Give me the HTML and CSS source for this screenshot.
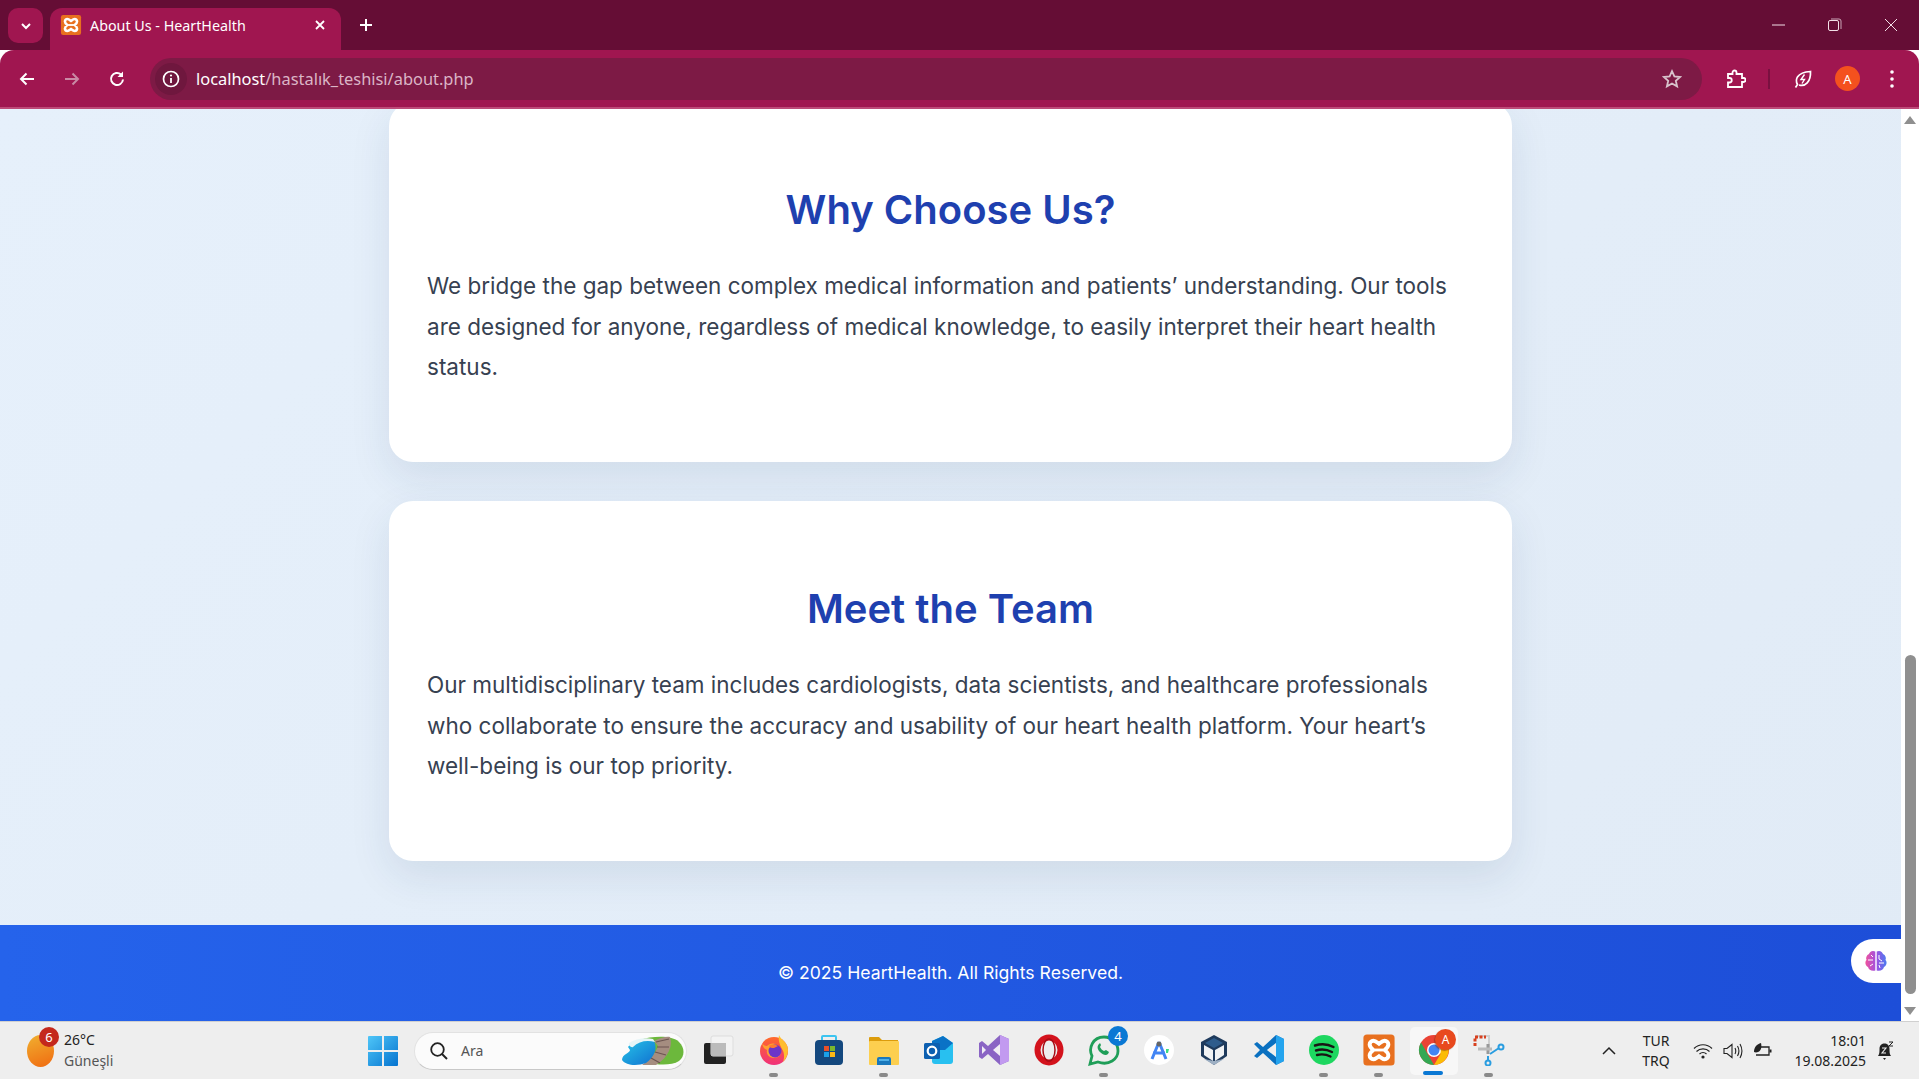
FILE: index.html
```html
<!DOCTYPE html>
<html lang="en">
<head>
    <meta charset="UTF-8">
    <title>About Us - HeartHealth</title>
    <link rel="stylesheet" href="styles.css">
</head>
<body>
    <svg class="defs" width="0" height="0">
        <symbol id="xampp" viewBox="0 0 24 24">
            <rect x="1" y="1" width="22" height="22" rx="2.500" fill="#e8701f"/>
            <path d="M8 5.500a2.600 2.600 0 0 0-2.600 2.600c0 1.700 1.300 2.900 2.600 3.900-1.300 1-2.600 2.200-2.600 3.900A2.600 2.600 0 0 0 8 18.500c1.700 0 2.900-1.300 4-2.100 1.100.8 2.300 2.100 4 2.100a2.600 2.600 0 0 0 2.600-2.600c0-1.700-1.300-2.900-2.600-3.900 1.300-1 2.600-2.200 2.600-3.900A2.600 2.600 0 0 0 16 5.500c-1.700 0-2.900 1.300-4 2.100-1.100-.8-2.300-2.100-4-2.100z" fill="none" stroke="#fff" stroke-width="2.800"/>
            <path d="M9 12h6" stroke="#fff" stroke-width="2"/>
        </symbol>
    </svg>

    <header class="tabstrip">
        <div class="tab-search">
            <svg width="14" height="14" viewBox="0 0 14 14"><path d="M3 5l4 4 4-4" fill="none" stroke="#fff" stroke-width="2"/></svg>
        </div>
        <div class="tab">
            <svg class="favicon" width="22" height="22"><use href="#xampp"/></svg>
            <span class="tab-title">About Us - HeartHealth</span>
            <svg width="12" height="12" viewBox="0 0 12 12"><path d="M2 2l8 8M10 2l-8 8" stroke="#fff" stroke-width="1.800"/></svg>
        </div>
        <svg class="new-tab" width="14" height="14" viewBox="0 0 14 14"><path d="M7 1v12M1 7h12" stroke="#fff" stroke-width="2"/></svg>
        <div class="window-btns">
            <svg width="14" height="14" viewBox="0 0 14 14"><path d="M0 7h13" stroke="#f3dfe7" stroke-width="1"/></svg>
            <svg width="14" height="14" viewBox="0 0 14 14"><rect x=".5" y="2.500" width="10" height="10" rx="1.500" fill="none" stroke="#f3dfe7"/><path d="M3 1h8a2 2 0 0 1 2 2v8" fill="none" stroke="#c9a5b6"/></svg>
            <svg width="14" height="14" viewBox="0 0 14 14"><path d="M1 1l12 12M13 1L1 13" stroke="#f3dfe7" stroke-width="1"/></svg>
        </div>
    </header>

    <nav class="toolbar">
        <svg class="nav-icon" width="18" height="18" viewBox="0 0 18 18"><path d="M16 9H3M8.500 3.500L3 9l5.500 5.500" fill="none" stroke="#fff" stroke-width="2"/></svg>
        <svg class="nav-icon" width="18" height="18" viewBox="0 0 18 18"><path d="M2 9h13M9.500 3.500L15 9l-5.500 5.500" fill="none" stroke="#c98aa5" stroke-width="2"/></svg>
        <svg class="nav-icon" width="18" height="18" viewBox="0 0 18 18"><path d="M15 9.500A6 6 0 1 1 13 4.500" fill="none" stroke="#fff" stroke-width="2"/><path d="M15 1.500V7H9.500z" fill="#fff"/></svg>
        <div class="omnibox">
            <div class="site-info">
                <svg width="18" height="18" viewBox="0 0 18 18"><circle cx="9" cy="9" r="7.500" fill="none" stroke="#fff" stroke-width="1.700"/><path d="M9 8v5" stroke="#fff" stroke-width="1.800"/><circle cx="9" cy="5.500" r="1.100" fill="#fff"/></svg>
            </div>
            <span class="url"><b>localhost</b>/hastalık_teshisi/about.php</span>
            <svg class="star" width="20" height="20" viewBox="0 0 20 20"><path d="M10 2.200l2.400 5.200 5.700.6-4.300 3.800 1.300 5.600L10 14.500l-5.100 2.900 1.300-5.600L1.900 8l5.700-.6z" fill="none" stroke="#d8c3cc" stroke-width="1.800"/></svg>
        </div>
        <div class="toolbar-right">
            <svg width="20" height="20" viewBox="0 0 20 20"><path d="M2 5h4.500V3.500a2 2 0 0 1 4 0V5H16v4h1.500a2 2 0 0 1 0 4H16v5H2v-4.500h1.500a2 2 0 0 0 0-4.500H2z" fill="none" stroke="#fff" stroke-width="1.800"/></svg>
            <span class="toolbar-sep"></span>
            <svg width="20" height="20" viewBox="0 0 20 20"><path d="M2.500 18.500l2-3C2 11 3 3.500 17.500 2.500 18 13 12 18 6 16" fill="none" stroke="#fff" stroke-width="1.700"/><path d="M11.500 5.500L8 10.500h3.500L9 14.500" fill="none" stroke="#fff" stroke-width="1.400"/></svg>
            <span class="avatar">A</span>
            <svg width="6" height="20" viewBox="0 0 6 20"><circle cx="3" cy="3" r="1.800" fill="#fff"/><circle cx="3" cy="10" r="1.800" fill="#fff"/><circle cx="3" cy="17" r="1.800" fill="#fff"/></svg>
        </div>
    </nav>

    <div class="viewport">
        <div class="page">
            <main class="content">
                <section class="card">
                    <h2>Why Choose Us?</h2>
                    <p>We bridge the gap between complex medical information and patients’ understanding. Our tools are designed for anyone, regardless of medical knowledge, to easily interpret their heart health status.</p>
                </section>
                <section class="card">
                    <h2>Meet the Team</h2>
                    <p>Our multidisciplinary team includes cardiologists, data scientists, and healthcare professionals who collaborate to ensure the accuracy and usability of our heart health platform. Your heart’s well-being is our top priority.</p>
                </section>
            </main>
            <footer class="site-footer">© 2025 HeartHealth. All Rights Reserved.</footer>
            <div class="brain-widget">
                <svg width="24" height="24" viewBox="0 0 24 24">
                    <defs><linearGradient id="brain" x1="0" y1="0" x2="1" y2="0"><stop offset="0" stop-color="#f0529c"/><stop offset=".5" stop-color="#a050e0"/><stop offset="1" stop-color="#4a7cf0"/></linearGradient></defs>
                    <path d="M11.300 2.500C8 1 5.500 3 5 5 2.500 6 1.500 9 2.500 11 .5 13 1.500 17 4 18c.5 3 4 4.500 7.300 3.500zM12.700 2.500C16 1 18.500 3 19 5c2.500 1 3.500 4 2.500 6 2 2 1 6-1.500 7-.5 3-4 4.500-7.300 3.500z" fill="url(#brain)"/>
                    <path d="M4 11h5M7 6l2 2M6 17l3-2M15 6v4l3 2M15 14h5M16 19l-1-3" stroke="#fff" stroke-width="1" fill="none"/>
                </svg>
            </div>
        </div>
        <div class="scrollbar">
            <svg width="12" height="8" viewBox="0 0 12 8"><path d="M6 0l6 8H0z" fill="#8f8f8f"/></svg>
            <div class="scroll-track"><div class="scroll-thumb"></div></div>
            <svg width="12" height="8" viewBox="0 0 12 8"><path d="M0 0h12L6 8z" fill="#8f8f8f"/></svg>
        </div>
    </div>

    <div class="taskbar">
        <div class="weather">
            <div class="weather-icon"><span class="weather-badge">6</span></div>
            <div class="weather-text">
                <span>26°C</span>
                <span class="weather-sub">Güneşli</span>
            </div>
        </div>
        <svg class="start" width="30" height="30" viewBox="0 0 30 30">
            <defs><linearGradient id="win" x1="0" y1="0" x2="1" y2="1"><stop offset="0" stop-color="#4fc6f8"/><stop offset="1" stop-color="#0573cf"/></linearGradient></defs>
            <path d="M0 1a1 1 0 0 1 1-1h13v14H0zM16 0h13a1 1 0 0 1 1 1v13H16zM0 16h14v14H1a1 1 0 0 1-1-1zM16 16h14v13a1 1 0 0 1-1 1H16z" fill="url(#win)"/>
        </svg>
        <div class="search">
            <svg width="20" height="20" viewBox="0 0 20 20"><circle cx="8.500" cy="8.500" r="6.300" fill="none" stroke="#222" stroke-width="1.800"/><path d="M13 13l5 5" stroke="#222" stroke-width="2"/></svg>
            <span class="search-label">Ara</span>
            <svg class="search-art" width="62" height="30" viewBox="0 0 62 30">
                <defs><linearGradient id="lake" x1="0" y1="0" x2="1" y2="1"><stop offset="0" stop-color="#27c4e8"/><stop offset="1" stop-color="#1070d0"/></linearGradient></defs>
                <path d="M18 4C30 0 50-1 57 6c6 6 6 14 0 19-6 4-16 4-24 3z" fill="#6cb83c"/>
                <path d="M32 5c6-3 12-5 16-4 3 8-1 20-14 28H20c8-6 14-12 16-19z" fill="#a58d80"/>
                <path d="M34 6l13-3M35 11l12 0M33 16l11 3M29 22l9 5" stroke="#6c5550" stroke-width="1.200"/>
                <path d="M6 11c4-6 16-8 26-6 4 8 0 16-8 22-8 3-20 3-24-3 0-6 8-7 8-10z" fill="url(#lake)"/>
                <path d="M7 7c6-4 16-6 24-4l2 3c-8-2-16-1-22 5-2 1-5-2-4-4z" fill="#e6f5f7"/>
            </svg>
        </div>

        <div class="apps">
            <div class="app">
                <svg width="32" height="32" viewBox="0 0 32 32"><rect x="1" y="9" width="22" height="21" rx="2" fill="#222"/><rect x="8" y="2" width="22" height="20" rx="2" fill="#f3f3f3" stroke="#ddd"/><rect x="8" y="9" width="15" height="13" fill="#bbb"/></svg>
            </div>
            <div class="app has-dot">
                <svg width="32" height="32" viewBox="0 0 32 32">
                    <defs><linearGradient id="fox" x1="0" y1="0" x2="0" y2="1"><stop offset="0" stop-color="#ff6a2a"/><stop offset="1" stop-color="#f0307a"/></linearGradient></defs>
                    <circle cx="16" cy="17" r="14" fill="url(#fox)"/>
                    <path d="M21 1c1 4 9 7 9 15 0 5-2 9-5 12 2-5 1-10-1-13-2-4-4-8-3-14z" fill="#ffbd2e"/>
                    <path d="M4 9c1 2 3 3 5 3 2-2 5-3 8-2l6 5c1 5-2 9-7 9-5 0-8-4-7-8-2-1-4-2-5-7z" fill="#ffa030"/>
                    <circle cx="17" cy="17" r="6.500" fill="#6c35c8"/>
                    <path d="M11 12c3-2 7-1 9 0l-4 2c-2 0-4 0-5-2z" fill="#ff7a30"/>
                </svg>
            </div>
            <div class="app">
                <svg width="30" height="32" viewBox="0 0 30 32"><path d="M8 7V3a1 1 0 0 1 1-1h12a1 1 0 0 1 1 1v4" fill="none" stroke="#3cc4f0" stroke-width="2"/><rect x="1" y="6" width="28" height="25" rx="4" fill="#14487e"/><rect x="10" y="12" width="5" height="5" fill="#e8502a"/><rect x="16" y="12" width="5" height="5" fill="#7cb82c"/><rect x="10" y="18" width="5" height="5" fill="#1ba0e8"/><rect x="16" y="18" width="5" height="5" fill="#fcb815"/></svg>
            </div>
            <div class="app has-dot">
                <svg width="32" height="32" viewBox="0 0 32 32"><path d="M1 4a1 1 0 0 1 1-1h9l3 3h16v8H1z" fill="#dc9c0c"/><rect x="1" y="7" width="30" height="24" rx="1" fill="#fdcf4f"/><path d="M9 31v-6a2 2 0 0 1 2-2h10a2 2 0 0 1 2 2v6z" fill="#1a78bc"/><rect x="11" y="25" width="10" height="2" fill="#4fb0e8"/></svg>
            </div>
            <div class="app">
                <svg width="32" height="32" viewBox="0 0 32 32"><path d="M9 7l11-5 10 7v18a3 3 0 0 1-3 3H12a3 3 0 0 1-3-3z" fill="#28c0f0"/><path d="M9 7l11-5 10 7-8 7H9z" fill="#0a72c6"/><rect x="1" y="9" width="16" height="16" rx="1.500" fill="#0c5fb0"/><circle cx="9" cy="17" r="4.300" fill="none" stroke="#fff" stroke-width="2.200"/></svg>
            </div>
            <div class="app">
                <svg width="30" height="32" viewBox="0 0 30 32"><path d="M21 1l9 4v22l-9 4-12-11-6 5-3-2V9l3-2 6 5z" fill="#8a64c4"/><path d="M21 1l9 4v22l-9 4z" fill="#c29af0"/><path d="M21 10l-7 6 7 6z" fill="#f0edf4"/><path d="M3 12l4 4-4 4z" fill="#f0edf4"/></svg>
            </div>
            <div class="app">
                <svg width="30" height="32" viewBox="0 0 30 32"><ellipse cx="15" cy="16" rx="11.500" ry="12.500" fill="none" stroke="#d3121c" stroke-width="6"/><ellipse cx="15" cy="16" rx="6" ry="11" fill="none" stroke="#a80d16" stroke-width="1.500"/></svg>
            </div>
            <div class="app has-dot">
                <svg width="32" height="32" viewBox="0 0 32 32"><path d="M2 30l2-8C0 14 5 3 16 3c8 0 14 6 14 14s-9 15-20 11z" fill="none" stroke="#1f9e58" stroke-width="2.800"/><path d="M11 10c-2 2-2 5 1 8s6 4 8 2l1-2-3-2-2 1c-2-1-3-2-4-4l1-2-1-2z" fill="#1f9e58"/></svg>
                <span class="app-badge">4</span>
            </div>
            <div class="app">
                <svg width="30" height="30" viewBox="0 0 30 30"><circle cx="15" cy="15" r="15" fill="#fff"/><path d="M15 7L8 24M15 7l7 17M9 18h12" fill="none" stroke="#4285f4" stroke-width="3"/><circle cx="15" cy="9" r="2.500" fill="#666"/><path d="M22 14h3l-1 4h-2z" fill="#3ddc84"/></svg>
            </div>
            <div class="app">
                <svg width="28" height="32" viewBox="0 0 28 32"><path d="M14 1l13 7v14l-13 9L1 22V8z" fill="#1e3a5c"/><path d="M14 4l9 5-9 5-9-5z" fill="#2e5c8c"/><path d="M4 11l9 5v11l-9-6zM24 11l-9 5v11l9-6z" fill="#f0f2f4"/><path d="M14 31l-10-6 10 2 10-2z" fill="#9eb0c4"/></svg>
            </div>
            <div class="app">
                <svg width="30" height="32" viewBox="0 0 30 32"><path d="M22 1l8 4v22l-8 4-13-12-6 5-3-2 6-6-6-6 3-2 6 5z" fill="#0a70c0"/><path d="M22 1l8 4v22l-8 4zM22 9l-9 7 9 7z" fill="#24a4ee"/><path d="M22 9l-9 7 9 7z" fill="#eee"/></svg>
            </div>
            <div class="app has-dot">
                <svg width="30" height="30" viewBox="0 0 30 30"><circle cx="15" cy="15" r="15" fill="#1ed760"/><path d="M6 10.500c6-2 13-1.500 18.500 1.500M7 15.500c5-1.500 11-1 16 1.500M8 20c4-1 9-.8 13.500 1.500" fill="none" stroke="#191414" stroke-width="2.400" stroke-linecap="round"/></svg>
            </div>
            <div class="app has-dot">
                <svg width="34" height="34"><use href="#xampp"/></svg>
            </div>
            <div class="app app-active">
                <svg width="32" height="32" viewBox="0 0 32 32"><circle cx="16" cy="16" r="15" fill="#ea4335"/><path d="M3 8.500l7.500 13L16 31a15 15 0 0 1-13-22.500z" fill="#34a853"/><path d="M16 9h13a15 15 0 0 1-13 22l6.500-11z" fill="#fbbc05"/><circle cx="16" cy="16" r="7" fill="#fff"/><circle cx="16" cy="16" r="5.500" fill="#4285f4"/></svg>
                <span class="chrome-badge">A</span>
            </div>
            <div class="app has-dot">
                <svg width="32" height="32" viewBox="0 0 32 32"><path d="M3 2h13v12" fill="none" stroke="#cfcfcf" stroke-width="2"/><path d="M2 12V3h11" fill="none" stroke="#d8401e" stroke-width="3" stroke-dasharray="3 1.500"/><path d="M15 10v10" stroke="#999" stroke-width="3"/><path d="M5 15h14" stroke="#bbb" stroke-width="3"/><path d="M17 20l9-6M15 22v5" stroke="#2a9de0" stroke-width="2"/><circle cx="28" cy="13" r="2.500" fill="none" stroke="#2a9de0" stroke-width="2"/><circle cx="15" cy="29" r="2.500" fill="none" stroke="#2a9de0" stroke-width="2"/></svg>
            </div>
        </div>

        <div class="tray">
            <svg class="tray-chevron" width="14" height="10" viewBox="0 0 14 10"><path d="M1 8l6-6 6 6" fill="none" stroke="#222" stroke-width="1.500"/></svg>
            <div class="lang"><span>TUR</span><span>TRQ</span></div>
            <div class="tray-icons">
                <svg width="20" height="18" viewBox="0 0 20 18"><path d="M1 6.500c5-5 13-5 18 0M3.500 9.500c3.500-3.500 9.500-3.500 13 0M6.500 12c2-1.800 5-1.800 7 0" fill="none" stroke="#222" stroke-width="1.200"/><circle cx="10" cy="15" r="1.600" fill="#222"/></svg>
                <svg width="20" height="18" viewBox="0 0 20 18"><path d="M1 6.500h3l5-4v13l-5-4H1z" fill="none" stroke="#222" stroke-width="1.100"/><path d="M12 6c1 2 1 4 0 6M14.500 4c1.700 3 1.700 7 0 10M17 2c2.500 4.500 2.500 9.500 0 14" fill="none" stroke="#222" stroke-width="1.100"/></svg>
                <svg width="20" height="18" viewBox="0 0 20 18"><path d="M7 5h9v8H3" fill="none" stroke="#222" stroke-width="1.300"/><path d="M16.500 7.500h2v3h-2" fill="#222"/><path d="M1 10C1 5 4 2 8 1c1 4 0 8-3 9-1 .5-3 .5-4 0z" fill="#222"/></svg>
            </div>
            <div class="clock"><span>18:01</span><span>19.08.2025</span></div>
            <svg class="bell" width="18" height="20" viewBox="0 0 18 20"><path d="M1 15c1.500-2 1.500-4 1.500-7C2.500 4 5 2.500 7.500 2.500S12.500 4 12.500 8c0 3 0 5 1.500 7z" fill="#222"/><path d="M6 17h3l-1.500 2z" fill="#222"/><path d="M5 7h4l-4 5h4" fill="none" stroke="#eee" stroke-width="1.100"/><path d="M12 1h4l-4 4h4" fill="none" stroke="#222" stroke-width="1"/></svg>
        </div>
    </div>
</body>
</html>
```

FILE: styles.css
```css
* {
    box-sizing: border-box;
}

body {
    margin: 0;
    height: 1079px;
    display: flex;
    flex-direction: column;
    overflow: hidden;
    font-family: "Inter", "Liberation Sans", sans-serif;
}

.defs {
    position: absolute;
}

/* browser top */
.tabstrip {
    height: 50px;
    flex-shrink: 0;
    background-color: #650d35;
    display: flex;
    align-items: flex-end;
    padding-left: 8px;
    color: #fff;
}

.tab-search {
    width: 35px;
    height: 35px;
    margin-bottom: 7px;
    border-radius: 10px;
    background-color: #a01650;
    display: flex;
    align-items: center;
    justify-content: center;
}

.tab {
    width: 291px;
    height: 42px;
    margin-left: 7px;
    padding: 0 15px 8px 10px;
    background-color: #a01650;
    border-radius: 12px 12px 0 0;
    display: flex;
    align-items: center;
    font-family: "Noto Sans", sans-serif;
    font-size: 14.3px;
}

.favicon {
    margin-right: 8px;
}

.tab-title {
    flex: 1;
}

.new-tab {
    margin: 0 0 18px 18px;
}

.window-btns {
    margin-left: auto;
    align-self: flex-start;
    margin-top: 18px;
    display: flex;
    gap: 42px;
    padding-right: 21px;
}

.toolbar {
    height: 59px;
    flex-shrink: 0;
    background-color: #a01650;
    border-bottom: 2px solid #bd4a78;
    border-radius: 14px 14px 0 0;
    display: flex;
    align-items: center;
    padding: 0 24px 0 18px;
}

.nav-icon {
    margin-right: 27px;
}

.nav-icon:nth-child(3) {
    margin-right: 24px;
}

.omnibox {
    width: 1552px;
    height: 42px;
    flex-shrink: 0;
    border-radius: 21px;
    background-color: #7d1a45;
    display: flex;
    align-items: center;
    padding: 0 20px 0 5px;
    font-family: "Noto Sans", sans-serif;
    font-size: 16.4px;
}

.site-info {
    width: 32px;
    height: 32px;
    border-radius: 50%;
    background-color: #6f173e;
    display: flex;
    align-items: center;
    justify-content: center;
    margin-right: 9px;
}

.url {
    flex: 1;
    color: #dbb5c6;
}

.url b {
    font-weight: 400;
    color: #fff;
}

.toolbar-right {
    display: flex;
    align-items: center;
    margin-left: 24px;
}

.toolbar-sep {
    width: 2px;
    height: 20px;
    margin: 0 23px 0 22px;
    background-color: #7a1040;
}

.avatar {
    width: 25px;
    height: 25px;
    margin: 0 29px 0 22px;
    border-radius: 50%;
    background-color: #f4511e;
    color: #fff;
    font-family: "Noto Sans", sans-serif;
    font-size: 13px;
    display: flex;
    align-items: center;
    justify-content: center;
}

/* page */
.viewport {
    flex: 1;
    min-height: 0;
    display: flex;
}

.page {
    flex: 1;
    min-width: 0;
    position: relative;
    overflow: hidden;
    background: linear-gradient(135deg, #e6f0fb, #e1ebf6);
    display: flex;
    flex-direction: column;
    justify-content: flex-end;
}

.content {
    display: flex;
    flex-direction: column;
    align-items: center;
    gap: 39px;
    padding-bottom: 64px;
}

.card {
    width: 1123px;
    height: 360px;
    padding: 78px 38px 0;
    background-color: #fff;
    border-radius: 24px;
    box-shadow: 0 15px 40px rgba(30, 60, 100, 0.1);
}

.card h2 {
    margin: 0 0 26px;
    text-align: center;
    font-size: 40px;
    line-height: 60px;
    font-weight: 600;
    color: #1e40af;
}

.card p {
    margin: 0;
    font-size: 22.5px;
    line-height: 40.5px;
    color: #374151;
}

.site-footer {
    height: 96px;
    padding-bottom: 2px;
    flex-shrink: 0;
    background: linear-gradient(90deg, #2563eb, #1d4ed8);
    color: #fff;
    font-size: 17.6px;
    display: flex;
    align-items: center;
    justify-content: center;
}

.brain-widget {
    position: absolute;
    right: 0;
    bottom: 38px;
    width: 50px;
    height: 44px;
    border-radius: 22px 0 0 22px;
    background-color: #fff;
    display: flex;
    align-items: center;
    padding-left: 13px;
}

.scrollbar {
    width: 18px;
    flex-shrink: 0;
    background-color: #fff;
    display: flex;
    flex-direction: column;
    align-items: center;
    padding: 7px 0 6px;
    gap: 4px;
}

.scroll-track {
    flex: 1;
    width: 100%;
    display: flex;
    flex-direction: column;
    justify-content: flex-end;
    padding: 0 3px 0 4px;
}

.scroll-thumb {
    height: 339px;
    margin-bottom: 9px;
    border-radius: 6px;
    background-color: #8f8f8f;
}

/* windows taskbar */
.taskbar {
    height: 58px;
    flex-shrink: 0;
    background-color: #eeeeee;
    border-top: 1px solid #d0d0d0;
    display: flex;
    align-items: center;
    font-family: "Noto Sans", sans-serif;
    font-size: 14px;
    color: #222;
}

.weather {
    width: 368px;
    flex-shrink: 0;
    padding-left: 27px;
    display: flex;
    align-items: center;
    gap: 10px;
}

.weather-icon {
    position: relative;
    width: 27px;
    height: 32px;
    border-radius: 50%;
    background: linear-gradient(160deg, #f0b030, #f06a10);
}

.weather-badge {
    position: absolute;
    left: 12px;
    top: -8px;
    width: 20px;
    height: 20px;
    border-radius: 50%;
    background-color: #c4281c;
    color: #fff;
    font-size: 13px;
    line-height: 20px;
    text-align: center;
}

.weather-text {
    display: flex;
    flex-direction: column;
    padding-bottom: 2px;
    line-height: 21px;
}

.weather-sub {
    color: #555;
}

.start {
    flex-shrink: 0;
}

.search {
    width: 273px;
    height: 38px;
    margin: 0 4px 0 16px;
    flex-shrink: 0;
    padding: 0 2px 0 14px;
    border-radius: 19px;
    background-color: #fbfbfb;
    border: 1px solid #e2e2e2;
    border-bottom-color: #c8c8c8;
    display: flex;
    align-items: center;
    gap: 12px;
    color: #555;
}

.search-label {
    flex: 1;
}

.apps {
    display: flex;
    flex-shrink: 0;
}

.app {
    position: relative;
    width: 55px;
    height: 48px;
    padding-bottom: 2px;
    display: flex;
    align-items: center;
    justify-content: center;
}

.has-dot::after {
    content: "";
    position: absolute;
    left: 23px;
    bottom: -2px;
    width: 9px;
    height: 4px;
    border-radius: 2px;
    background-color: #8a8a8a;
}

.app-badge {
    position: absolute;
    right: 3px;
    top: -1px;
    width: 20px;
    height: 20px;
    border-radius: 50%;
    background-color: #0a78d4;
    color: #fff;
    font-size: 13px;
    line-height: 20px;
    text-align: center;
}

.app-active::before {
    content: "";
    position: absolute;
    left: 4px;
    right: 3px;
    top: 0;
    bottom: 0;
    border-radius: 5px;
    background-color: #f7f7f7;
}

.app-active svg {
    position: relative;
}

.app-active::after {
    content: "";
    position: absolute;
    left: 17px;
    bottom: 0;
    width: 20px;
    height: 4px;
    border-radius: 2px;
    background-color: #0a78d4;
}

.chrome-badge {
    position: absolute;
    right: 5px;
    top: 2px;
    width: 21px;
    height: 21px;
    border-radius: 50%;
    background-color: #e8491e;
    color: #fff;
    font-size: 12px;
    line-height: 21px;
    text-align: center;
    box-shadow: -1px 1px 1px rgba(120, 40, 20, 0.5);
}

.tray {
    flex: 1;
    display: flex;
    align-items: center;
    padding-left: 86px;
}

.lang {
    width: 40px;
    margin-left: 20px;
    display: flex;
    flex-direction: column;
    align-items: center;
    line-height: 20px;
}

.tray-icons {
    display: flex;
    gap: 10px;
    margin-left: 17px;
}

.clock {
    width: 88px;
    margin-left: 5px;
    display: flex;
    flex-direction: column;
    align-items: flex-end;
    line-height: 20px;
}

.bell {
    margin-left: 11px;
}
```
